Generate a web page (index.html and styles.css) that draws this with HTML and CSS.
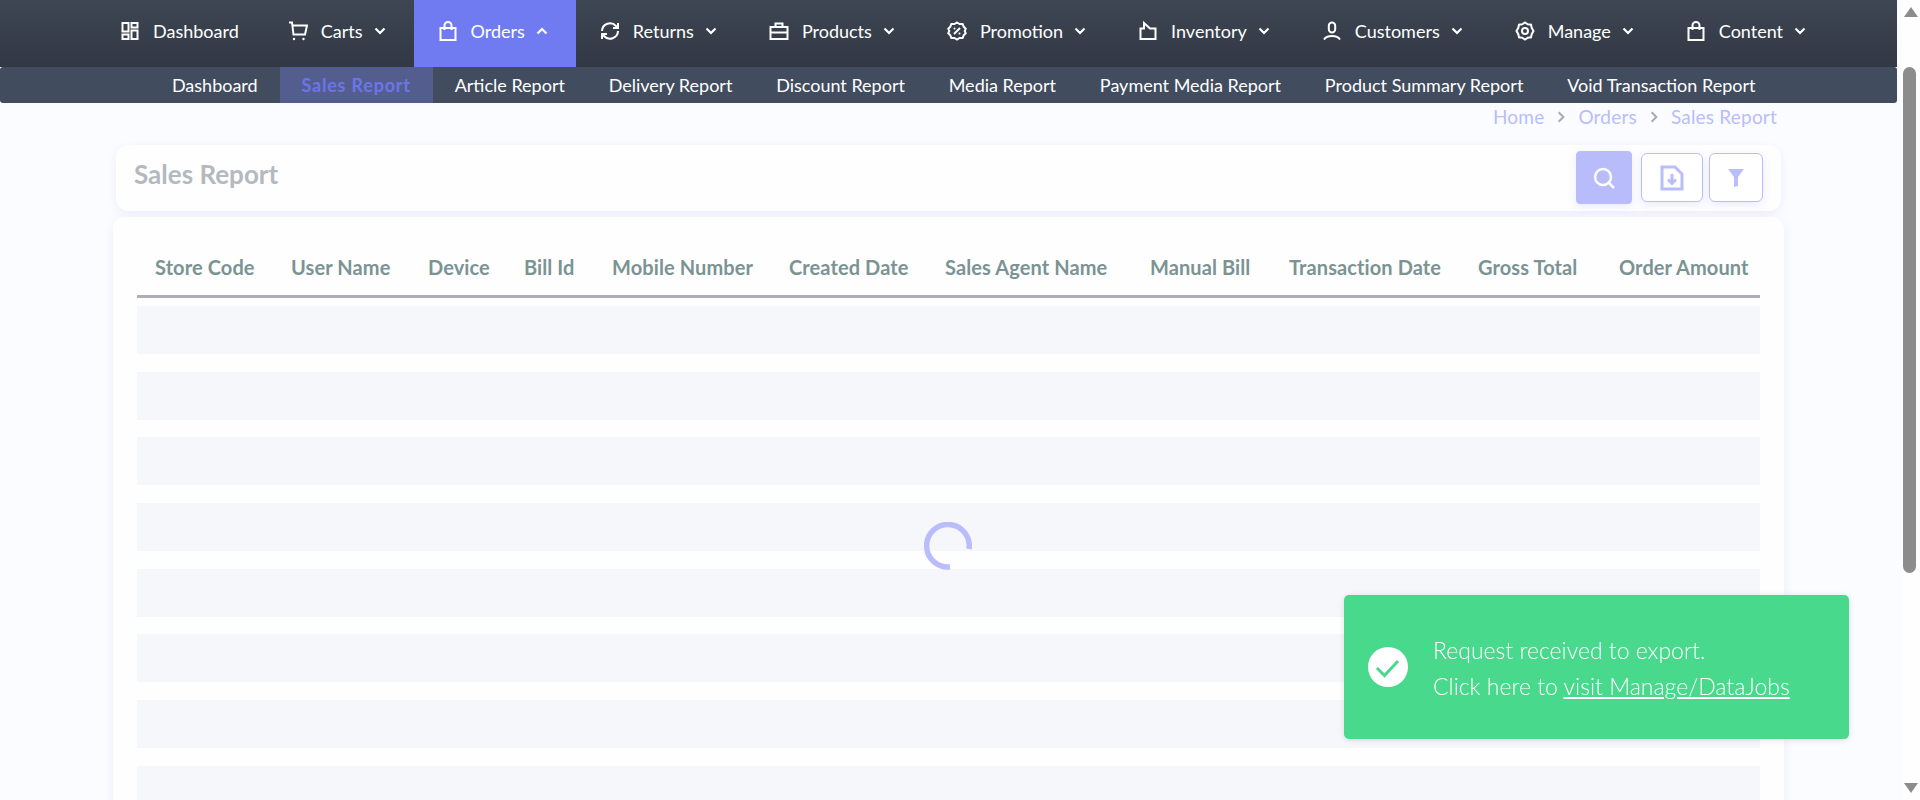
FILE: index.html
```html
<!DOCTYPE html>
<html lang="en">
<head>
    <meta charset="UTF-8">
    <meta name="viewport" content="width=device-width, initial-scale=1.0">
    <title>Sales Report</title>
    <link rel="stylesheet" href="styles.css">
</head>
<body>
    <div class="page">
        <div class="main">
            <header class="header">
                <nav class="top-nav">
                    <a class="top-item">
                        <svg class="icon" viewBox="0 0 20 20"><rect x="2.5" y="2" width="6" height="8.5"/><rect x="11.5" y="2" width="6" height="4.5"/><rect x="2.5" y="13.5" width="6" height="4.5"/><rect x="11.5" y="9.5" width="6" height="8.5"/></svg>
                        <span>Dashboard</span>
                    </a>
                    <a class="top-item">
                        <svg class="icon" viewBox="0 0 20 20"><path d="M1 1.5h3l1.5 12h11.5l2-9h-15"/><circle class="dot" cx="6" cy="18" r="1.2"/><circle class="dot" cx="15.5" cy="18" r="1.2"/></svg>
                        <span>Carts</span>
                        <svg class="chevron" viewBox="0 0 12 8"><path d="M1.5 1.5l4.5 4.5 4.500-4.500"/></svg>
                    </a>
                    <a class="top-item active">
                        <svg class="icon" viewBox="0 0 20 20"><path d="M2.5 7h15v12h-15zM6.5 9V4.5a3.5 3.5 0 0 1 7 0V9"/></svg>
                        <span>Orders</span>
                        <svg class="chevron" viewBox="0 0 12 8"><path d="M1.5 6.5l4.5-4.5 4.5 4.5"/></svg>
                    </a>
                    <a class="top-item">
                        <svg class="icon" viewBox="0 0 20 20"><path d="M2 10a8 8 0 0 1 14-5l2 2M18 10a8 8 0 0 1-14 5l-2-2"/><path d="M18 2v5h-5M2 18v-5h5"/></svg>
                        <span>Returns</span>
                        <svg class="chevron" viewBox="0 0 12 8"><path d="M1.5 1.5l4.5 4.5 4.5-4.5"/></svg>
                    </a>
                    <a class="top-item">
                        <svg class="icon" viewBox="0 0 20 20"><path d="M1.5 6h17v12h-17zM6.5 6V2.5h7V6M1.5 11.5h17M10 10.500v2"/></svg>
                        <span>Products</span>
                        <svg class="chevron" viewBox="0 0 12 8"><path d="M1.5 1.5l4.5 4.5 4.5-4.5"/></svg>
                    </a>
                    <a class="top-item">
                        <svg class="icon" viewBox="0 0 20 20"><path d="M10 1.5l2.600 1.500 3-.1 1.100 2.700 2 2.200-1 2.200 1 2.200-2 2.200-1.100 2.700-3-.1-2.600 1.500-2.600-1.500-3 .1-1.100-2.700-2-2.200 1-2.200-1-2.200 2-2.200 1.100-2.700 3 .1z"/><path d="M7 13l6-6"/><circle class="dot" cx="7.5" cy="7.5" r="1"/><circle class="dot" cx="12.5" cy="12.5" r="1"/></svg>
                        <span>Promotion</span>
                        <svg class="chevron" viewBox="0 0 12 8"><path d="M1.5 1.5l4.5 4.5 4.5-4.5"/></svg>
                    </a>
                    <a class="top-item">
                        <svg class="icon" viewBox="0 0 20 20"><path d="M2.5 18V7.5h3.5V2l6 5.5h5.5V18z"/></svg>
                        <span>Inventory</span>
                        <svg class="chevron" viewBox="0 0 12 8"><path d="M1.5 1.5l4.5 4.5 4.5-4.5"/></svg>
                    </a>
                    <a class="top-item">
                        <svg class="icon" viewBox="0 0 20 20"><rect x="6.8" y="1.5" width="6.4" height="10" rx="3.2"/><path d="M2 18.5c1.5-2.5 4.5-3.5 8-3.5s6.5 1 8 3.5"/></svg>
                        <span>Customers</span>
                        <svg class="chevron" viewBox="0 0 12 8"><path d="M1.5 1.5l4.5 4.5 4.5-4.5"/></svg>
                    </a>
                    <a class="top-item">
                        <svg class="icon" viewBox="0 0 20 20"><path d="M10 1.5l2.800 1.800 3.200.4.700 3.100 1.800 3.200-1.800 3.200-.7 3.100-3.200.4-2.800 1.800-2.800-1.800-3.200-.4-.7-3.100L1.500 10l1.800-3.200.7-3.100 3.200-.4z"/><circle cx="10" cy="10" r="3"/></svg>
                        <span>Manage</span>
                        <svg class="chevron" viewBox="0 0 12 8"><path d="M1.5 1.5l4.5 4.5 4.5-4.5"/></svg>
                    </a>
                    <a class="top-item">
                        <svg class="icon" viewBox="0 0 20 20"><path d="M2.5 7h15v12h-15zM6.5 9V4.5a3.5 3.5 0 0 1 7 0V9"/></svg>
                        <span>Content</span>
                        <svg class="chevron" viewBox="0 0 12 8"><path d="M1.5 1.5l4.5 4.5 4.5-4.5"/></svg>
                    </a>
                </nav>
                <nav class="sub-nav">
                    <a class="sub-item">Dashboard</a>
                    <a class="sub-item active">Sales Report</a>
                    <a class="sub-item">Article Report</a>
                    <a class="sub-item">Delivery Report</a>
                    <a class="sub-item">Discount Report</a>
                    <a class="sub-item">Media Report</a>
                    <a class="sub-item">Payment Media Report</a>
                    <a class="sub-item">Product Summary Report</a>
                    <a class="sub-item">Void Transaction Report</a>
                </nav>
            </header>

            <div class="content">
                <div class="breadcrumb">
                    <span>Home</span>
                    <svg viewBox="0 0 8 12"><path d="M2 2l4 4-4 4"/></svg>
                    <span>Orders</span>
                    <svg viewBox="0 0 8 12"><path d="M2 2l4 4-4 4"/></svg>
                    <span>Sales Report</span>
                </div>

                <div class="title-card">
                    <h1>Sales Report</h1>
                    <div class="actions">
                        <button class="btn btn-search">
                            <svg viewBox="0 0 24 24"><circle cx="11" cy="11" r="8"/><path d="M17 17l5 5"/></svg>
                        </button>
                        <button class="btn btn-export">
                            <svg viewBox="0 0 24 26"><path d="M2 2h13l7 7v15H2z"/><path d="M12 9v9M8 14.5l4 4 4-4"/></svg>
                        </button>
                        <button class="btn btn-filter">
                            <svg viewBox="0 0 18 20"><path class="solid" d="M1 1h16l-6 8v9l-4 1V9z"/></svg>
                        </button>
                    </div>
                </div>

                <div class="table-card">
                    <div class="table-head">
                        <div>Store Code</div>
                        <div>User Name</div>
                        <div>Device</div>
                        <div>Bill Id</div>
                        <div>Mobile Number</div>
                        <div>Created Date</div>
                        <div>Sales Agent Name</div>
                        <div>Manual Bill</div>
                        <div>Transaction Date</div>
                        <div>Gross Total</div>
                        <div>Order Amount</div>
                    </div>
                    <div class="table-rows">
                        <div class="row"></div>
                        <div class="row"></div>
                        <div class="row"></div>
                        <div class="row"></div>
                        <div class="row"></div>
                        <div class="row"></div>
                        <div class="row"></div>
                        <div class="row"></div>
                    </div>
                    <svg class="spinner" viewBox="0 0 48 48"><path d="M45 27A21.3 21.3 0 1 0 26 45"/></svg>
                </div>
            </div>
        </div>

        <div class="scrollbar">
            <span class="arrow-up"></span>
            <span class="thumb"></span>
            <span class="arrow-down"></span>
        </div>
    </div>

    <div class="toast">
        <svg class="toast-icon" viewBox="0 0 40 40"><circle cx="20" cy="20" r="20"/><path d="M9 21l7.5 7.5L30 14"/></svg>
        <div class="toast-text">
            <div>Request received to export.</div>
            <div>Click here to <a>visit Manage/DataJobs</a></div>
        </div>
    </div>
</body>
</html>
```

FILE: styles.css
```css
* {
    box-sizing: border-box;
}
body {
    margin: 0;
    font-family: Lato, "Noto Sans", sans-serif;
    background-color: #fbfcff;
    overflow: hidden;
}
.page {
    display: flex;
    height: 800px;
    overflow: hidden;
}
.main {
    width: 1902px;
}

/* header */
.header {
    width: 1897px;
}
.top-nav {
    display: flex;
    height: 67px;
    padding-left: 96px;
    background: linear-gradient(#3d4653, #323844);
}
.top-item {
    display: flex;
    align-items: center;
    padding: 0 28px 6px 24px;
    color: #fff;
    font-size: 18px;
}
.top-item:first-child {
    padding-right: 25px;
}
.top-item.active {
    background-color: #707bf2;
}
.top-item span {
    margin-left: 13px;
}
.icon {
    width: 20px;
    height: 20px;
    fill: none;
    stroke: #fff;
    stroke-width: 2;
}
.icon .dot {
    fill: #fff;
    stroke: none;
}
.chevron {
    width: 12px;
    height: 8px;
    margin-left: 11px;
    fill: none;
    stroke: #fff;
    stroke-width: 2.2;
}
.sub-nav {
    display: flex;
    height: 36px;
    padding-left: 150px;
    background-color: #414c5e;
    border-radius: 3px;
}
.sub-item {
    display: flex;
    align-items: center;
    padding: 0 21.9px;
    color: #fff;
    font-size: 18px;
}
.sub-item.active {
    color: #6c75e8;
    background-color: #535e8f;
    font-weight: 700;
    letter-spacing: 0.8px;
}

/* content */
.content {
    margin-left: 113px;
    width: 1671px;
}
.breadcrumb {
    display: flex;
    align-items: center;
    justify-content: flex-end;
    gap: 12px;
    height: 27px;
    padding-right: 7px;
    color: #b9bdfa;
    font-size: 19px;
    letter-spacing: 0.2px;
}
.breadcrumb svg {
    width: 10px;
    height: 14px;
    fill: none;
    stroke: #a9acb8;
    stroke-width: 1.8;
}
.title-card {
    display: flex;
    align-items: center;
    justify-content: space-between;
    height: 66px;
    margin: 15px 3px 6px;
    padding: 0 18px;
    background-color: #fefeff;
    border-radius: 12px;
    box-shadow: 0 3px 10px rgba(120, 125, 245, 0.12);
}
.title-card h1 {
    margin: 0 0 8px;
    color: #b4b9be;
    font-size: 26px;
    font-weight: 700;
}
.actions {
    display: flex;
    align-items: center;
}
.btn {
    display: flex;
    align-items: center;
    justify-content: center;
    height: 49px;
    margin-bottom: 1px;
    padding: 0;
    background-color: #fff;
    border: 1px solid #b9bdfb;
    border-radius: 6px;
    box-shadow: 0 3px 8px rgba(120, 125, 245, 0.15);
}
.btn svg {
    fill: none;
    stroke: #b9bdfb;
    stroke-width: 3;
}
.btn-search {
    width: 56px;
    height: 53px;
    margin-right: 9px;
    background-color: #b8bcfa;
    border-radius: 4px;
}
.btn-search svg {
    width: 24px;
    height: 24px;
    stroke: #fdfdff;
    stroke-width: 2.5;
}
.btn-export {
    width: 62px;
    margin-right: 6px;
}
.btn-export svg {
    width: 24px;
    height: 26px;
}
.btn-filter {
    width: 54px;
}
.btn-filter svg {
    width: 18px;
    height: 20px;
}
.btn-filter .solid {
    fill: #b9bdfb;
    stroke: none;
}

/* table */
.table-card {
    position: relative;
    height: 640px;
    padding: 24px 24px 0;
    background-color: #fefeff;
    border-radius: 12px;
    box-shadow: 0 3px 10px rgba(120, 125, 245, 0.12);
}
.table-head {
    display: grid;
    grid-template-columns: 136px 137px 96px 88px 177px 156px 205px 139px 189px 141px 159px;
    align-items: center;
    height: 57px;
    padding: 0 0 2px 18px;
    color: #7b9393;
    font-size: 20px;
    font-weight: 700;
    letter-spacing: 0.1px;
    white-space: nowrap;
    border-bottom: 3px solid #adafb5;
}
.table-rows {
    display: flex;
    flex-direction: column;
    gap: 17.7px;
    margin-top: 8px;
}
.row {
    height: 48px;
    background-color: #f6f7fb;
}
.spinner {
    position: absolute;
    left: 811px;
    top: 305px;
    width: 48px;
    height: 48px;
    fill: none;
    stroke: #b9bdfb;
    stroke-width: 5.5;
}

/* scrollbar */
.scrollbar {
    display: flex;
    flex-direction: column;
    align-items: center;
    width: 18px;
    background-color: #fefefe;
}
.arrow-up {
    width: 0;
    height: 0;
    margin-top: 7px;
    border-left: 7px solid transparent;
    border-right: 7px solid transparent;
    border-bottom: 10px solid #8c8c8c;
}
.thumb {
    width: 13px;
    height: 506px;
    margin: 50px 0 0 -3px;
    background-color: #8c8c8c;
    border-radius: 7px;
}
.arrow-down {
    width: 0;
    height: 0;
    margin-top: 210px;
    border-left: 7px solid transparent;
    border-right: 7px solid transparent;
    border-top: 10px solid #8c8c8c;
}

/* toast */
.toast {
    position: fixed;
    left: 1344px;
    top: 595px;
    display: flex;
    align-items: center;
    width: 505px;
    height: 144px;
    padding-left: 24px;
    color: #fff;
    background-color: #48d98c;
    border-radius: 5px;
    box-shadow: 0 1px 6px rgba(0, 0, 0, 0.12);
}
.toast-icon {
    flex: none;
    width: 40px;
    height: 40px;
    margin-right: 25px;
}
.toast-icon circle {
    fill: #fff;
}
.toast-icon path {
    fill: none;
    stroke: #48d98c;
    stroke-width: 3;
}
.toast-text {
    padding-top: 2px;
    font-size: 23px;
    font-weight: 300;
    line-height: 36px;
}
.toast-text a {
    text-decoration: underline;
}
```
